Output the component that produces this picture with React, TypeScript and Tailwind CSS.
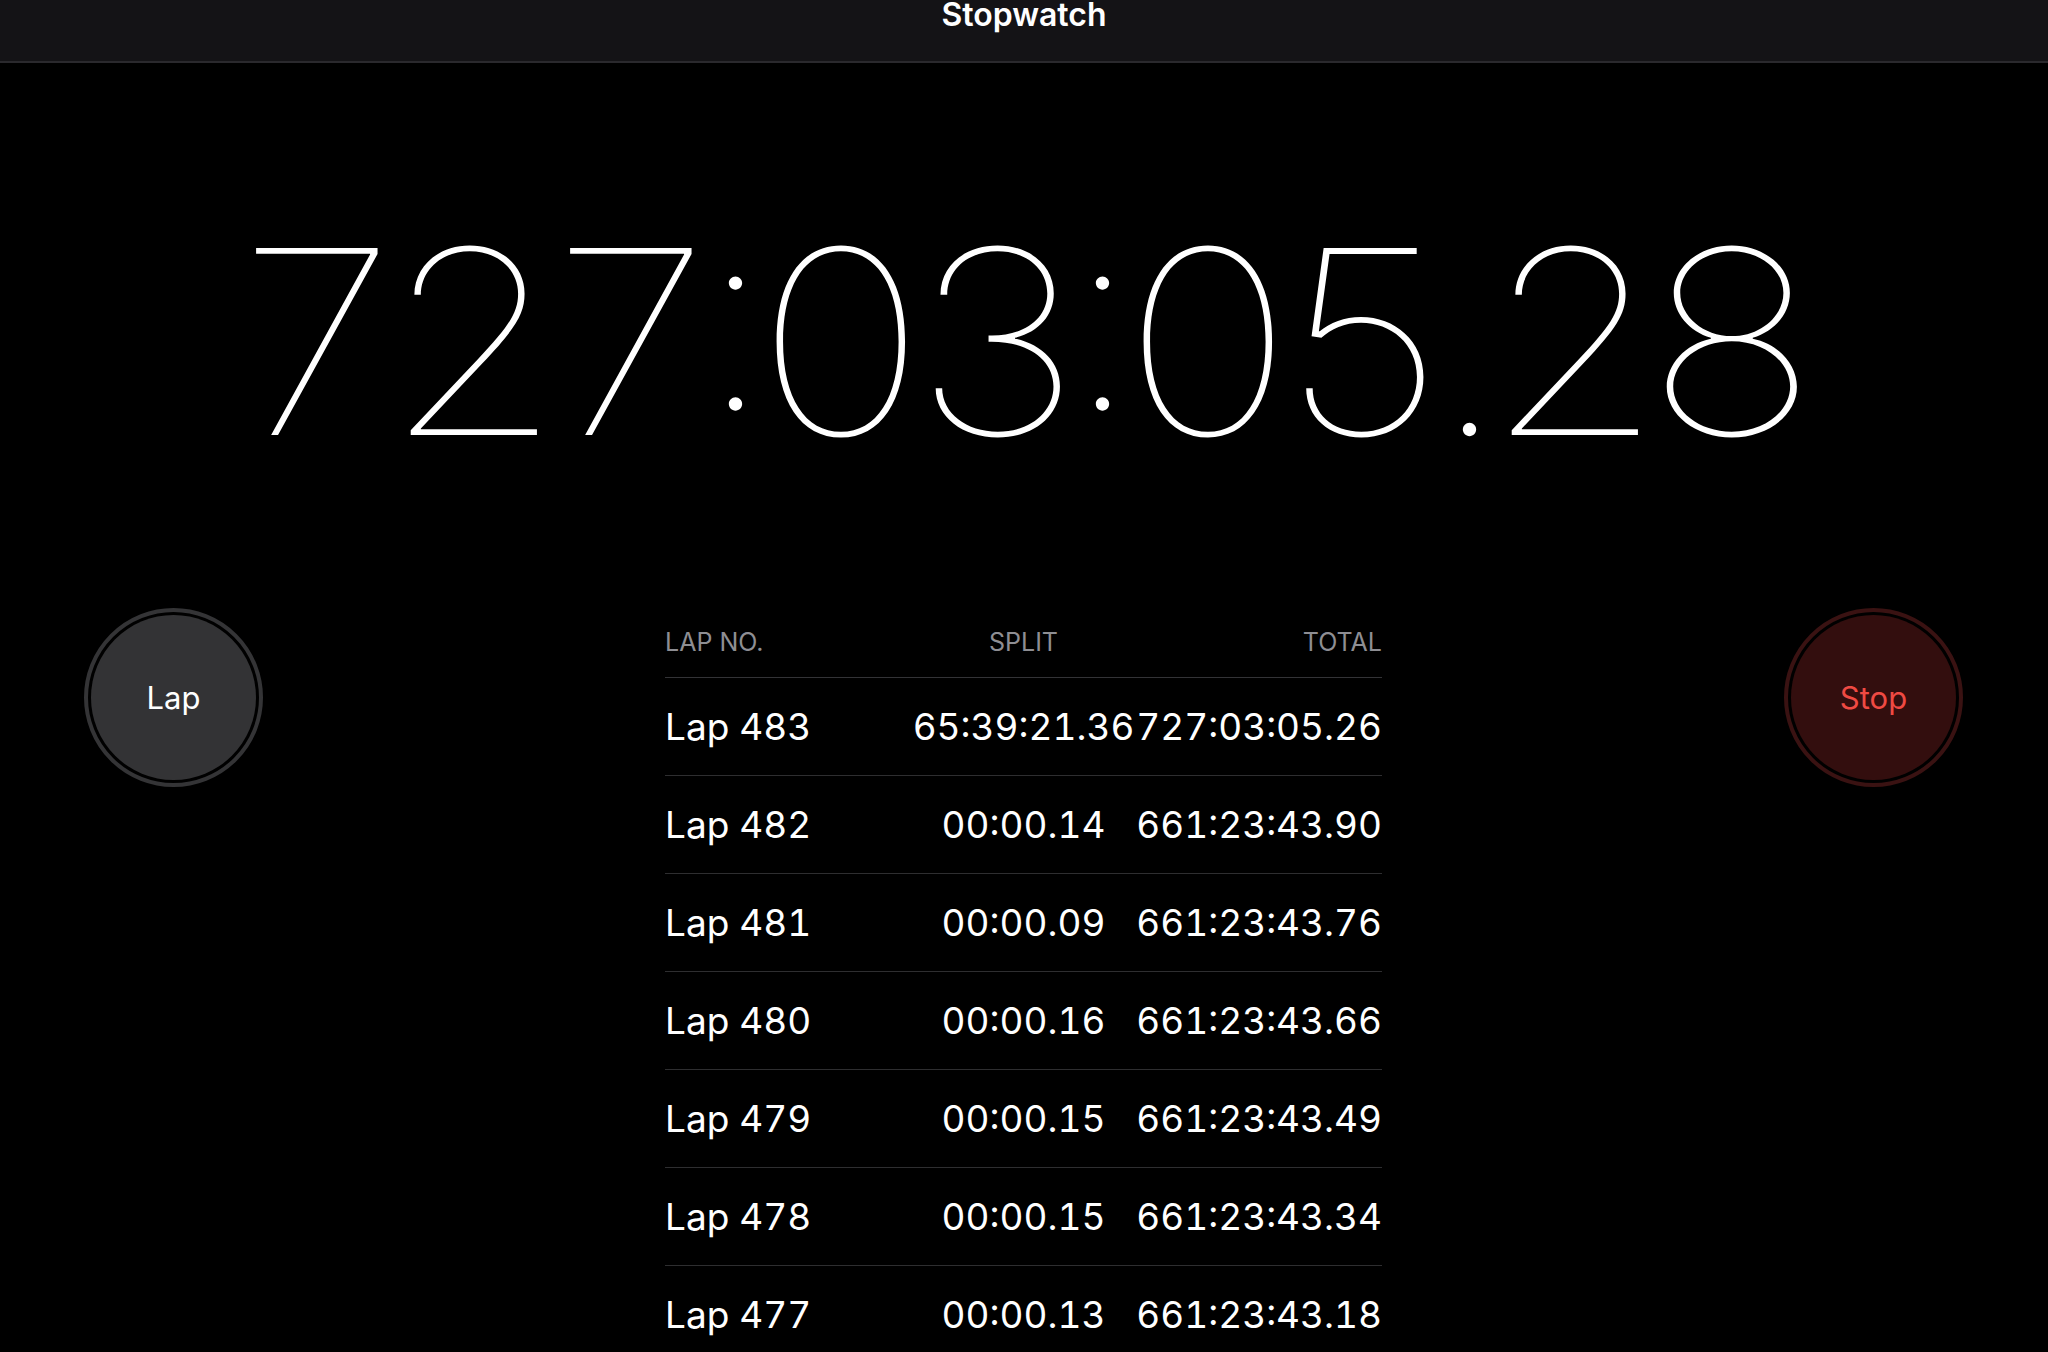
import React from "react";

const laps: [string, string, string][] = [
  ["Lap 483", "65:39:21.36", "727:03:05.26"],
  ["Lap 482", "00:00.14", "661:23:43.90"],
  ["Lap 481", "00:00.09", "661:23:43.76"],
  ["Lap 480", "00:00.16", "661:23:43.66"],
  ["Lap 479", "00:00.15", "661:23:43.49"],
  ["Lap 478", "00:00.15", "661:23:43.34"],
  ["Lap 477", "00:00.13", "661:23:43.18"],
];

const time = "727:03:05.28".split("");

export default function App() {
  return (
    <div className="h-screen w-full overflow-hidden bg-black text-white font-['Inter','Roboto',sans-serif]">
      <header className="h-[63px] bg-[#141316] border-b-2 border-[#2a292d] flex justify-center">
        <h1 className="text-[32px] leading-[32px] font-semibold -mt-[1px]">
          Stopwatch
        </h1>
      </header>

      <div className="pt-[150px] flex justify-center">
        <div className="flex text-[257px] leading-[257px] font-thin [font-feature-settings:'tnum','case']">
          {time.map((ch, i) => (
            <span
              key={i}
              className={
                ch === ":" || ch === "."
                  ? "w-[53px] flex justify-center"
                  : "w-[157px] flex justify-center"
              }
            >
              <span className={ch === ":" || ch === "." ? "" : "inline-block scale-x-[1.12]"}>{ch}</span>
            </span>
          ))}
        </div>
      </div>

      <div className="mt-[138px] flex justify-between items-start pl-[84px] pr-[85px]">
        <button className="w-[179px] h-[179px] rounded-full border-4 border-[#343436] p-[3px] bg-black">
          <div className="w-full h-full rounded-full bg-[#333335] flex items-center justify-center text-[31px] leading-none text-white">
            Lap
          </div>
        </button>

        <div className="w-[717px]">
          <div className="grid grid-cols-[1fr_auto_1fr] pt-[22px] pb-[22px] border-b border-[#333336] text-[25px] leading-[25px] text-[#8e8e93]">
            <span className="text-left">LAP NO.</span>
            <span className="text-center">SPLIT</span>
            <span className="text-right">TOTAL</span>
          </div>
          {laps.map(([n, s, t]) => (
            <div
              key={n}
              className="grid grid-cols-[1fr_auto_1fr] items-center h-[98px] border-b border-[#2e2e30] text-[37px] leading-[37px] [font-feature-settings:'tnum','case']"
            >
              <span className="text-left whitespace-nowrap">{n}</span>
              <span className="text-center whitespace-nowrap">{s}</span>
              <span className="text-right whitespace-nowrap">{t}</span>
            </div>
          ))}
        </div>

        <button className="w-[179px] h-[179px] rounded-full border-4 border-[#3a1212] p-[3px] bg-black">
          <div className="w-full h-full rounded-full bg-[#330e0e] flex items-center justify-center text-[31px] leading-none text-[#ef4a43]">
            Stop
          </div>
        </button>
      </div>
    </div>
  );
}
